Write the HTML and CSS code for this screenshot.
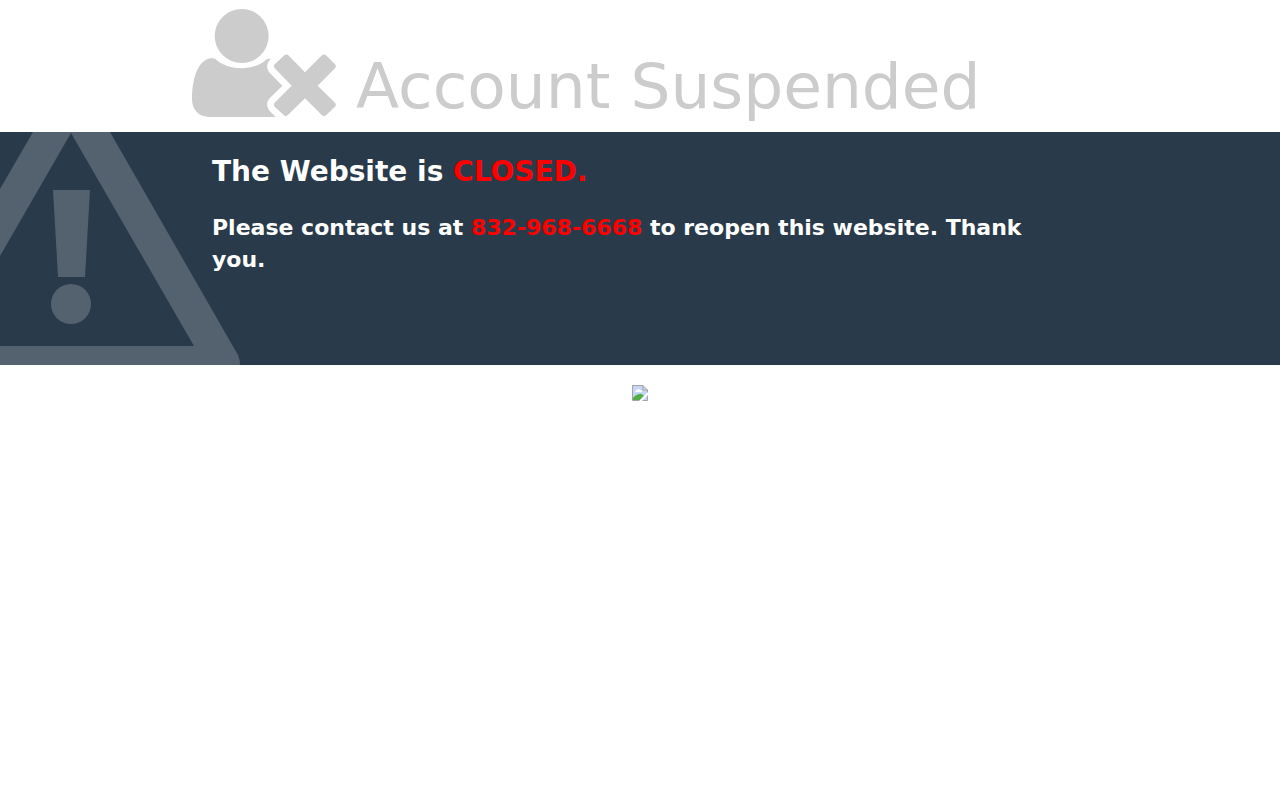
FILE: index.html
```
<!DOCTYPE html>
<html lang="en">
<head>
  <meta charset="UTF-8">
  <meta name="viewport" content="width=device-width, initial-scale=1.0">
  <title>Account Suspended</title>
  <link rel="stylesheet" href="styles.css">
</head>
<body>
  <header class="container status-header">
    <svg class="user-icon" viewBox="36 27 432 324" aria-hidden="true">
      <circle cx="185" cy="108" r="81"/>
      <path d="M105 176C144 213 222 214 258 179Q264 174 272 177C258 191 259 207 269 218L307 257L269 295C259 306 259 321 269 333L287 351H88C57 351 36 330 36 298C36 228 58 177 94 175Q100 174 105 176Z"/>
      <path d="M313 166Q319 161 325 166L375 217L426 166Q432 161 438 166L465 193Q470 199 465 205L413 257L465 308Q470 314 465 320L438 346Q432 351 426 346L375 295L323 346Q318 351 312 346L284 320Q279 314 284 308L335 257L284 205Q279 199 284 193Z"/>
    </svg>
    <h1 class="status-title">Account Suspended</h1>
  </header>

  <main>
    <section class="notice">
      <svg class="warning-icon" viewBox="0 0 240 233" aria-hidden="true">
        <path fill-rule="evenodd" d="M33 0H110L238 223Q240 227 240 233H0V214H194L71 1L0 124V57Z"/>
        <path d="M53 58H90L85 145H58Z"/>
        <circle cx="71" cy="172" r="20"/>
      </svg>
      <div class="container notice-text">
        <h2>The Website is <span class="highlight">CLOSED.</span></h2>
        <h3>Please contact us at <span class="highlight">832-968-6668</span> to reopen this website. Thank you.</h3>
      </div>
    </section>
  </main>

  <footer>
    <svg class="missing-image" viewBox="0 0 16 16" role="img" aria-label="Image unavailable">
      <path fill="#c5d7f5" d="M1 1H11L15 5V15H1Z"/>
      <path fill="#fff" d="M3 7Q3 5 5 5Q6 3 8 5Q10 5 10 7Z"/>
      <path fill="#55ad48" d="M1 15V13Q3 10 7 9Q10 8 12 11L8 15H1Z"/>
      <path fill="none" stroke="#a3a3a3" d="M.5 15.500V.5H11L15.500 5V15.500H.5M11 .5V5H15.500"/>
      <path fill="#fff" d="M16 7V10L10 16H7Z"/>
    </svg>
  </footer>
</body>
</html>
```
FILE: styles.css
```
:root {
  --muted-color: #cccccc;
  --notice-color: #293a4a;
  --highlight-color: #ff0000;
}

* {
  box-sizing: border-box;
  margin: 0;
  padding: 0;
}

body {
  font-family: "DejaVu Sans", sans-serif;
  background-color: #ffffff;
}

.container {
  width: 70%;
  margin: 0 auto;
}

.status-header {
  display: flex;
  align-items: flex-end;
  gap: 20px;
  padding: 9px 0;
  color: var(--muted-color);
}

.user-icon {
  flex: none;
  width: 144px;
  height: 108px;
  margin-bottom: 6px;
  fill: currentColor;
}

.status-title {
  font-size: 63px;
  font-weight: normal;
  line-height: 72px;
}

.notice {
  position: relative;
  min-height: 233px;
  overflow: hidden;
  background-color: var(--notice-color);
  color: #ffffff;
}

/* sits behind the notice text */
.warning-icon {
  position: absolute;
  left: 0;
  bottom: 0;
  width: 240px;
  height: 233px;
  fill: #54616e;
}

.notice-text {
  position: relative;
  padding: 20px;
}

.notice-text h2 {
  margin-bottom: 20px;
  font-size: 28px;
  line-height: 40px;
}

.notice-text h3 {
  font-size: 22px;
  line-height: 32px;
}

.highlight {
  color: var(--highlight-color);
}

footer {
  display: flex;
  justify-content: center;
  padding: 20px;
}

.missing-image {
  width: 16px;
  height: 16px;
}
```
